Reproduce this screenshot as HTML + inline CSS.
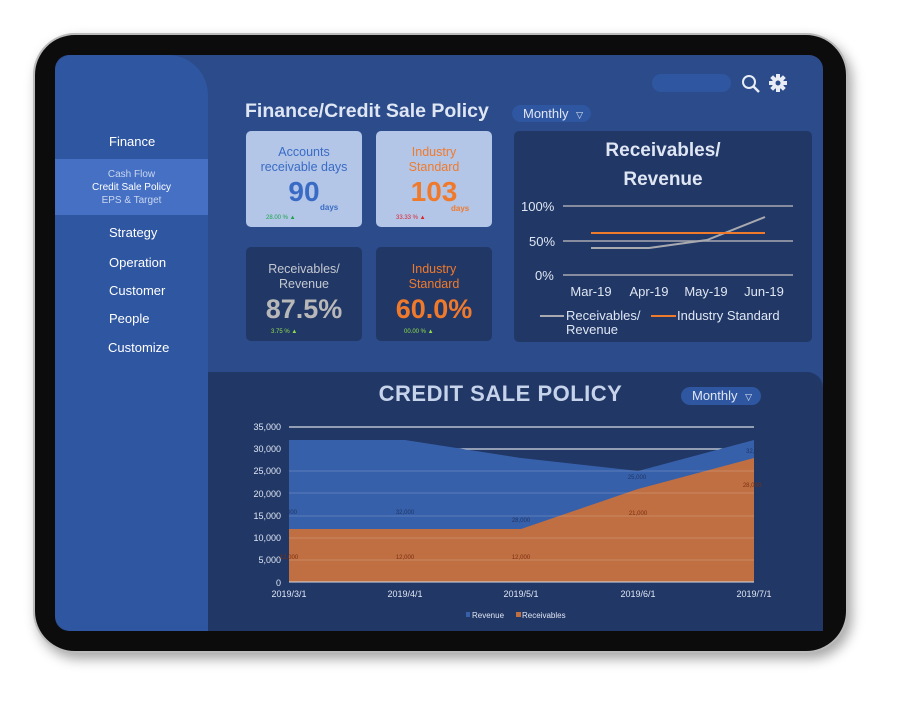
<!DOCTYPE html>
<html><head><style>
*{margin:0;padding:0;box-sizing:border-box}
body{width:898px;height:702px;background:#fff;font-family:"Liberation Sans","DejaVu Sans",sans-serif;position:relative;overflow:hidden}
.a{position:absolute}
.frame{left:33px;top:33px;width:815px;height:620px;background:#0c0c0c;border-radius:42px;box-shadow:4px 6px 12px rgba(0,0,0,.35);border:2px solid #bbb}
.screen{left:55px;top:55px;width:768px;height:576px;background:#2b4b8a;border-radius:14px;overflow:hidden}
.side{left:55px;top:55px;width:153px;height:576px;background:#2f56a0;border-radius:16px 40px 0 16px}
.nav{color:#fff;font-size:13px;left:109px}
.card{border-radius:5px;text-align:center}
.lc{background:#b3c6e8}
.dc{background:#213766}
</style></head><body>
<div class="a frame"></div>
<div class="a screen"></div>
<div class="a side"></div>
<div class="a nav" style="top:134px">Finance</div>
<div class="a" style="left:55px;top:159px;width:153px;height:56px;background:#4570c4"></div>
<div class="a" style="top:168px;font-size:10px;line-height:13px;left:55px;width:153px;text-align:center;color:#c9d6f0">Cash Flow<br><span style="color:#fff">Credit Sale Policy</span><br>EPS &amp; Target</div>
<div class="a nav" style="top:225px">Strategy</div>
<div class="a nav" style="top:255px">Operation</div>
<div class="a nav" style="top:283px">Customer</div>
<div class="a nav" style="top:311px">People</div>
<div class="a nav" style="top:340px;left:108px">Customize</div>

<div class="a" style="left:652px;top:74px;width:79px;height:18px;border-radius:9px;background:#2f56a0"></div>
<svg class="a" style="left:740px;top:73px" width="22" height="22" viewBox="0 0 22 22"><circle cx="9" cy="9" r="6" fill="none" stroke="#e8ecf4" stroke-width="2"/><line x1="13.5" y1="13.5" x2="19" y2="19" stroke="#e8ecf4" stroke-width="2.5"/></svg>
<svg class="a" style="left:768px;top:73px" width="20" height="20" viewBox="0 0 20 20"><g fill="#e8ecf4"><circle cx="10" cy="10" r="6"/><rect x="8" y="1" width="4" height="18"/><rect x="1" y="8" width="18" height="4"/><rect x="8" y="1" width="4" height="18" transform="rotate(45 10 10)"/><rect x="8" y="1" width="4" height="18" transform="rotate(-45 10 10)"/></g><circle cx="10" cy="10" r="2.5" fill="#2b4b8a"/></svg>

<div class="a" style="left:245px;top:100px;color:#dfe6f3;font-size:19.5px;font-weight:bold">Finance/Credit Sale Policy</div>
<div class="a" style="left:512px;top:105px;width:79px;height:17px;border-radius:9px;background:#2f56a0;color:#dfe6f3;font-size:13px;padding-left:11px;line-height:17px">Monthly <span style="font-size:9px;margin-left:4px">▽</span></div>

<div class="a card lc" style="left:246px;top:131px;width:116px;height:96px"><div style="color:#3a6bc4;font-size:12.5px;margin-top:14px;line-height:15px">Accounts<br>receivable days</div><div style="color:#3a6bc4;font-size:28px;font-weight:bold;margin-top:1px">90</div><div class="a" style="left:74px;top:72px;color:#3a6bc4;font-size:8px;font-weight:bold">days</div><div class="a" style="left:20px;top:84px;color:#1aa34a;font-size:6px">28.00 % ▲</div></div>
<div class="a card lc" style="left:376px;top:131px;width:116px;height:96px"><div style="color:#f07a2c;font-size:12.5px;margin-top:14px;line-height:15px">Industry<br>Standard</div><div style="color:#f07a2c;font-size:28px;font-weight:bold;margin-top:1px">103</div><div class="a" style="left:75px;top:73px;color:#f07a2c;font-size:8px;font-weight:bold">days</div><div class="a" style="left:20px;top:84px;color:#e0202a;font-size:6px">33.33 % ▲</div></div>
<div class="a card dc" style="left:246px;top:247px;width:116px;height:94px"><div style="color:#c4c8d0;font-size:12.5px;margin-top:15px;line-height:15px">Receivables/<br>Revenue</div><div style="color:#b8b8b8;font-size:27px;font-weight:bold;margin-top:2px">87.5%</div><div class="a" style="left:25px;top:82px;color:#8fe04a;font-size:6px">3.75 % ▲</div></div>
<div class="a card dc" style="left:376px;top:247px;width:116px;height:94px"><div style="color:#f07a2c;font-size:12.5px;margin-top:15px;line-height:15px">Industry<br>Standard</div><div style="color:#f07a2c;font-size:27px;font-weight:bold;margin-top:2px">60.0%</div><div class="a" style="left:28px;top:82px;color:#8fe04a;font-size:6px">00.00 % ▲</div></div>

<div class="a card dc" style="left:514px;top:131px;width:298px;height:211px"></div>
<div class="a" style="left:514px;top:136px;width:298px;text-align:center;color:#dfe6f3;font-size:19px;font-weight:bold;line-height:29px">Receivables/<br>Revenue</div>
<svg class="a" style="left:514px;top:190px" width="298" height="150" viewBox="514 190 298 150" font-family="Liberation Sans,sans-serif">
<g stroke="#a9aab0" stroke-width="1.5"><line x1="563" y1="206" x2="793" y2="206"/><line x1="563" y1="241" x2="793" y2="241"/><line x1="563" y1="275" x2="793" y2="275"/></g>
<g fill="#dfe6f3" font-size="13"><text x="521" y="211">100%</text><text x="529" y="246">50%</text><text x="535" y="280">0%</text>
<text x="591" y="296" text-anchor="middle">Mar-19</text><text x="649" y="296" text-anchor="middle">Apr-19</text><text x="706" y="296" text-anchor="middle">May-19</text><text x="764" y="296" text-anchor="middle">Jun-19</text>
<text x="566" y="320">Receivables/</text><text x="566" y="334">Revenue</text><text x="677" y="320">Industry Standard</text></g>
<polyline points="591,248 649,248 707,240 765,217" fill="none" stroke="#a9aab0" stroke-width="2"/>
<line x1="591" y1="233" x2="765" y2="233" stroke="#f07a2c" stroke-width="2"/>
<line x1="540" y1="316" x2="564" y2="316" stroke="#a9aab0" stroke-width="2"/>
<line x1="651" y1="316" x2="676" y2="316" stroke="#f07a2c" stroke-width="2"/>
</svg>

<div class="a" style="left:208px;top:372px;width:615px;height:259px;background:#213766;border-radius:0 16px 0 0"></div>
<div class="a" style="left:208px;top:381px;width:615px;text-align:center;color:#c6d3ea;font-size:22px;font-weight:bold;letter-spacing:.5px;padding-right:30px">CREDIT SALE POLICY</div>
<div class="a" style="left:681px;top:387px;width:80px;height:18px;border-radius:9px;background:#2f56a0;color:#dfe6f3;font-size:13px;padding-left:11px;line-height:18px">Monthly <span style="font-size:9px;margin-left:4px">▽</span></div>
<svg class="a" style="left:208px;top:410px" width="615" height="220" viewBox="208 410 615 220" font-family="Liberation Sans,sans-serif">
<line x1="289" y1="427" x2="754" y2="427" stroke="#d8dce4" stroke-width="1.2"/>
<line x1="289" y1="449" x2="754" y2="449" stroke="#d8dce4" stroke-width="1.2"/>
<polygon points="289,440 405,440 521,458 638,471 754,440 754,582 289,582" fill="#3760aa"/>
<polygon points="289,529 405,529 521,529 638,489 754,458 754,582 289,582" fill="#c06f42"/>
<g stroke="#ffffff" stroke-opacity=".18"><line x1="289" y1="471" x2="754" y2="471"/><line x1="289" y1="493" x2="754" y2="493"/><line x1="289" y1="516" x2="754" y2="516"/><line x1="289" y1="538" x2="754" y2="538"/><line x1="289" y1="560" x2="754" y2="560"/></g>
<line x1="289" y1="582" x2="754" y2="582" stroke="#d8dce4"/>
<g fill="#dfe6f3" font-size="9" text-anchor="end"><text x="281" y="430">35,000</text><text x="281" y="452">30,000</text><text x="281" y="474">25,000</text><text x="281" y="497">20,000</text><text x="281" y="519">15,000</text><text x="281" y="541">10,000</text><text x="281" y="563">5,000</text><text x="281" y="586">0</text></g>
<g fill="#dfe6f3" font-size="9" text-anchor="middle"><text x="289" y="597">2019/3/1</text><text x="405" y="597">2019/4/1</text><text x="521" y="597">2019/5/1</text><text x="638" y="597">2019/6/1</text><text x="754" y="597">2019/7/1</text></g>
<g fill="#1f3566" font-size="6" text-anchor="middle"><text x="292" y="514">000</text><text x="405" y="514">32,000</text><text x="521" y="522">28,000</text><text x="637" y="479">25,000</text><text x="752" y="453">32,0</text></g>
<g fill="#7a3010" font-size="6" text-anchor="middle"><text x="289" y="559">12,000</text><text x="405" y="559">12,000</text><text x="521" y="559">12,000</text><text x="638" y="515">21,000</text><text x="752" y="487">28,000</text></g>
<g fill="#dfe6f3" font-size="8"><rect x="466" y="612" width="4" height="5" fill="#3760aa"/><text x="472" y="618">Revenue</text><rect x="516" y="612" width="5" height="5" fill="#c06f42"/><text x="522" y="618">Receivables</text></g>
</svg>
</body></html>
